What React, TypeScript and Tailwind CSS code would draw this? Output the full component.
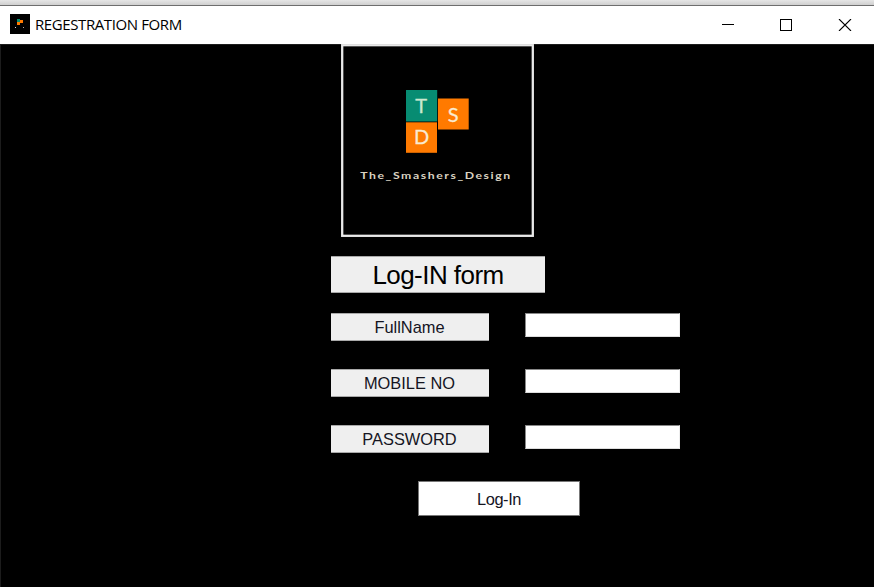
import React from "react";

const arial = "font-['Liberation_Sans',Arial,sans-serif]";

function AppIcon() {
  return (
    <svg className="-mt-0.5" width="20" height="20" viewBox="0 0 20 20" shapeRendering="crispEdges" aria-hidden="true">
      <rect width="20" height="20" fill="#000" />
      <rect x="7" y="5" width="3" height="3" fill="#0a8a70" />
      <rect x="10" y="6" width="3" height="3" fill="#ff7a00" />
      <rect x="7" y="8" width="3" height="3" fill="#ff7a00" />
      <rect x="5" y="13" width="1" height="1" fill="#ddd" />
      <rect x="13" y="13" width="1" height="1" fill="#aaa" />
    </svg>
  );
}

function TitleBar() {
  return (
    <header className="flex h-[38px] items-center bg-white pl-[10px] pr-[22px] text-black">
      <AppIcon />
      <h1 className="ml-[5px] flex-1 whitespace-nowrap pb-0.5 font-['Open_Sans','Noto_Sans',sans-serif] text-[15px] leading-5 tracking-[-0.4px]">
        REGESTRATION FORM
      </h1>
      <div className="flex items-center gap-[46px]">
        <svg width="12" height="12" viewBox="0 0 12 12" shapeRendering="crispEdges" aria-label="Minimize">
          <rect y="5" width="12" height="1" />
        </svg>
        <svg width="12" height="12" viewBox="0 0 12 12" fill="none" stroke="#000" aria-label="Maximize">
          <rect x=".5" y=".5" width="11" height="11" />
        </svg>
        <svg width="14" height="12" viewBox="-1 0 14 12" fill="none" stroke="#000" strokeWidth="1.1" aria-label="Close">
          <path d="M0 0L12 12M12 0L0 12" />
        </svg>
      </div>
    </header>
  );
}

function Logo() {
  return (
    <svg className="ml-[341px] block" width="193" height="193" viewBox="341 44 193 193" fontFamily="Lato, sans-serif">
      <rect x="342.2" y="45.2" width="190.6" height="190.6" fill="#000" stroke="#e9e9e9" strokeWidth="2.3" />
      <rect x="406" y="90" width="31.2" height="31.5" fill="#078c72" />
      <rect x="438" y="98.5" width="30.7" height="31" fill="#ff7a00" />
      <rect x="406" y="122.3" width="31" height="30.5" fill="#ff7a00" />
      <g fill="#f9ead0" stroke="#f9ead0" strokeWidth="0.3" fontSize="20" textAnchor="middle">
        <text x="421.2" y="113.3" fill="#cbe8cf" stroke="#cbe8cf">T</text>
        <text x="453.3" y="122.3">S</text>
        <text x="421.5" y="144.3">D</text>
      </g>
      <text transform="translate(360.2 179.4) scale(1.2 1)" fill="#d9d2c0" fontSize="10.2" fontWeight="700" textLength="125" lengthAdjust="spacing">
        The_Smashers_Design
      </text>
    </svg>
  );
}

function Field({ label, name, type }: { label: string; name: string; type: string }) {
  return (
    <div className="flex h-7 items-start">
      <label
        htmlFor={name}
        className={`${arial} flex h-7 w-[158px] items-center justify-center border-y border-[#a9a9a9] bg-[#efefef] pt-px pr-px text-[16.4px] leading-none text-[#15151f]`}
      >
        {label}
      </label>
      <input
        id={name}
        type={type}
        className="ml-9 h-6 w-[155px] rounded-none border border-b-[#ddd] border-l-[#888] border-r-[#eee] border-t-[#888] bg-white outline-none"
      />
    </div>
  );
}

export default function App() {
  return (
    <div className="h-[587px] w-[874px] overflow-hidden bg-black">
      <div className="h-[6px] border-b border-[#6e6e6e] bg-linear-to-b from-[#e6e6e6] to-[#cfcfcf]" />
      <TitleBar />
      <main className="h-[543px] border-l border-t border-[#1c1c1c] bg-black">
        <div className="-ml-px -mt-px">
          <Logo />
          <div className="ml-[331px] pt-[19px]">
            <h2 className={`${arial} flex h-[37px] w-[214px] items-center justify-center border-y border-[#a9a9a9] bg-[#efefef] text-[26px] leading-none tracking-[-0.55px] text-black`}>
              Log-IN form
            </h2>
            <form className="mt-5 flex flex-col gap-7" onSubmit={(e) => e.preventDefault()}>
              <Field label="FullName" name="fullname" type="text" />
              <Field label="MOBILE NO" name="mobile" type="text" />
              <Field label="PASSWORD" name="password" type="password" />
              <button className={`${arial} ml-[87px] flex h-[35px] w-[162px] items-center justify-center border border-[#777] bg-white pt-px text-[16.4px] leading-none tracking-[-0.4px] text-[#15151f]`}>
                Log-In
              </button>
            </form>
          </div>
        </div>
      </main>
    </div>
  );
}
